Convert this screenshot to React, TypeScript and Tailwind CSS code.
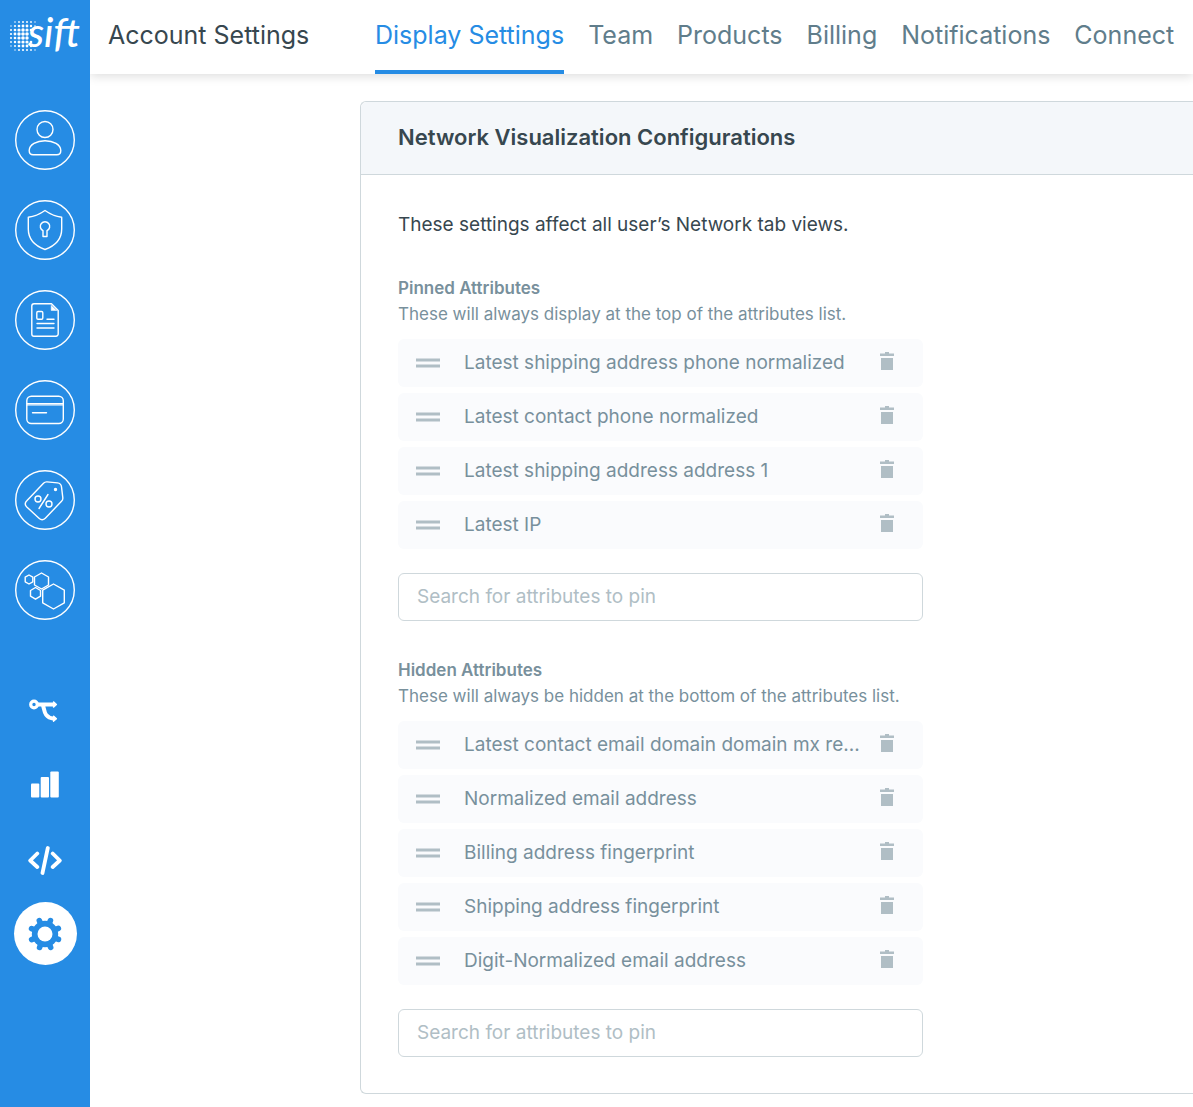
import type { ReactNode } from 'react';

const tabs = ['Display Settings', 'Team', 'Products', 'Billing', 'Notifications', 'Connect'];

const pinned = [
  'Latest shipping address phone normalized',
  'Latest contact phone normalized',
  'Latest shipping address address 1',
  'Latest IP',
];

const hidden = [
  'Latest contact email domain domain mx re...',
  'Normalized email address',
  'Billing address fingerprint',
  'Shipping address fingerprint',
  'Digit-Normalized email address',
];

// Halftone dots behind the wordmark: radius per column, row by row
const dotRadii = [
  [0, 0.8, 0.9, 1, 1, 0.9, 0.7],
  [0.7, 1.1, 1.3, 1.4, 1.4, 1.2, 0.8],
  [1, 1.3, 1.6, 1.7, 1.6, 1.3, 0],
  [1.1, 1.4, 1.7, 1.8, 1.8, 0, 0],
  [1, 1.3, 1.6, 1.8, 1.7, 0, 0],
  [0.9, 1.2, 1.5, 1.6, 1.6, 1.3, 0],
  [0.7, 1, 1.3, 1.4, 1.4, 1.2, 0.8],
  [0, 0.7, 1, 1.1, 1, 0.9, 0.7],
];

function Logo() {
  return (
    <a href="#" aria-label="sift" className="relative block h-14 w-full text-white">
      <svg className="absolute left-2 top-5" width="32" height="32" viewBox="0 0 32 32" fill="currentColor">
        {dotRadii.map((row, y) =>
          row.map((r, x) => (r ? <circle key={`${x}-${y}`} cx={3 + x * 4} cy={2 + y * 4} r={r} /> : null)),
        )}
      </svg>
      <span className="absolute left-7 top-3 font-['Lato'] text-[40px] font-medium italic leading-10">sift</span>
    </a>
  );
}

function ProductIcon({ label, children }: { label: string; children: ReactNode }) {
  return (
    <a href="#" aria-label={label} className="block text-white">
      <svg
        width="60"
        height="60"
        viewBox="0 0 60 60"
        fill="none"
        stroke="currentColor"
        strokeWidth="1.4"
        strokeLinejoin="round"
        strokeLinecap="round"
      >
        <circle cx="30" cy="30" r="29.3" />
        {children}
      </svg>
    </a>
  );
}

function Sidebar() {
  return (
    <nav aria-label="Main" className="flex w-[90px] shrink-0 flex-col items-center bg-[#268ce4]">
      <Logo />
      <div className="mt-[54px] flex flex-col gap-[30px]">
        <ProductIcon label="Accounts">
          <circle cx="30" cy="19.5" r="8" />
          <path d="M14.2 40.5c0-6 7.5-9.8 15.8-9.8s15.8 3.8 15.8 9.8c0 2.600-1.400 4.300-4 4.300H18.200c-2.600 0-4-1.700-4-4.300z" />
        </ProductIcon>
        <ProductIcon label="Account defense">
          <path d="M30 10.500C25 14 19 16.500 13.300 17.300V29c0 10 7 17 16.700 20.500C39.700 46 46.700 39 46.700 29V17.300C41 16.500 35 14 30 10.500z" />
          <path d="M28 30.700a4.700 4.700 0 1 1 4 0v5.800h-4z" />
        </ProductIcon>
        <ProductIcon label="Content integrity">
          <path d="M36.500 13.800H19a2.200 2.200 0 0 0-2.200 2.200v28a2.200 2.200 0 0 0 2.200 2.200h22a2.200 2.200 0 0 0 2.200-2.200V20.500z" />
          <path d="M36.200 15.500v5h5.500z" fill="currentColor" strokeWidth="0.5" />
          <rect x="21.800" y="21.500" width="6" height="7.800" rx="1.200" />
          <path d="M32 29.300h7M22 33.500h17M22 38h17" />
        </ProductIcon>
        <ProductIcon label="Payment protection">
          <rect x="11.800" y="16.200" width="36.500" height="27.300" rx="4.500" />
          <path d="M12 23.600h36M12 25h36" strokeWidth="1.100" />
          <path d="M17.500 32.800h14" />
        </ProductIcon>
        <ProductIcon label="Promotion abuse">
          <path d="M28.500 13.200c1-1 2-1.400 3.500-1.300l10.500 1c2.500.3 3.700 1.600 4 4l1.300 10.700c.2 1.500-.2 2.700-1.300 3.700L30.300 48.200c-2 2-4.300 2-6.300 0L11.800 37c-2-2-2-4.200 0-6.200z" />
          <circle cx="23" cy="29" r="3" />
          <circle cx="34" cy="34" r="3" />
          <path d="M33 24.500L24 38.500" />
          <circle cx="40.500" cy="19.500" r="1" fill="currentColor" />
        </ProductIcon>
        <ProductIcon label="Workflows">
          <path d="M14 15l3.800 2.200v4.600L14 24l-3.800-2.200v-4.600z" />
          <path d="M26.500 13l7 4v8l-7 4-7-4v-8z" />
          <path d="M20.500 27.500l5 3v5.700l-5 3-5-3v-5.700z" />
          <path d="M38.500 24l10.800 6.200v12.600L38.500 49l-10.800-6.200V30.200z" />
        </ProductIcon>
      </div>

      <div className="mt-[75px] flex flex-col items-center">
        <a href="#" aria-label="Routes" className="flex h-[30px] w-[34px] items-center justify-center text-white">
          <svg width="34" height="30" viewBox="0 0 34 30" fill="none" stroke="currentColor">
            <circle cx="6" cy="9.500" r="3.300" strokeWidth="3.200" />
            <path d="M9 9.500h17M14.500 9.500c2.500 3.500 0 13 11.500 14.200" strokeWidth="4" />
            <path
              d="M25.500 6.800l3 2.700-3 2.700zM25.500 21l3 2.700-3 2.700z"
              fill="currentColor"
              strokeWidth="1.200"
              strokeLinejoin="round"
            />
          </svg>
        </a>
        <a href="#" aria-label="Reports" className="mt-11 flex h-[30px] w-[34px] items-center justify-center text-white">
          <svg width="34" height="30" viewBox="0 0 34 30" fill="currentColor">
            <rect x="3" y="14.500" width="8.300" height="14" rx="1" />
            <rect x="12.700" y="8" width="8.300" height="20.500" rx="1" />
            <rect x="22.300" y="2.500" width="8.500" height="26" rx="1" />
          </svg>
        </a>
        <a href="#" aria-label="Developer" className="mt-[46px] flex h-[30px] w-9 items-center justify-center text-white">
          <svg
            width="36"
            height="30"
            viewBox="0 0 36 30"
            fill="none"
            stroke="currentColor"
            strokeWidth="3.800"
            strokeLinecap="round"
            strokeLinejoin="round"
          >
            <path d="M10.300 8.500L3.200 15.500l7.100 6.500M25.700 8.500l7.100 7-7.100 6.500M20.800 3l-5.300 25" />
          </svg>
        </a>
        <a
          href="#"
          aria-label="Settings"
          aria-current="page"
          className="mt-[27px] flex h-[63px] w-[63px] items-center justify-center rounded-full bg-white text-[#268ce4]"
        >
          <svg width="36" height="36" viewBox="-18 -18 36 36">
            <g transform="rotate(22)" stroke="currentColor" strokeWidth="5.600" strokeLinecap="round">
              {[0, 45, 90, 135].map((a) => (
                <path key={a} transform={`rotate(${a})`} d="M-14.500 0h29" />
              ))}
            </g>
            <circle r="13.200" fill="currentColor" />
            <circle r="7.500" fill="white" />
          </svg>
        </a>
      </div>
    </nav>
  );
}

function AttributeRow({ name }: { name: string }) {
  return (
    <li className="flex h-12 items-center rounded-md bg-[#fafbfd] pl-[18px] pr-7 text-[19px] text-[#78909c]">
      <svg className="shrink-0 text-[#b0bec5]" width="24" height="10" viewBox="0 0 24 10" fill="currentColor">
        <path d="M0 .5h24v3H0zM0 6.500h24v3H0z" />
      </svg>
      <span className="ml-6 min-w-0 flex-1 truncate">{name}</span>
      <button type="button" aria-label={`Remove ${name}`} className="mb-1 ml-3 shrink-0 text-[#b0bec5]">
        <svg width="16" height="18" viewBox="0 0 16 18" fill="currentColor">
          <path d="M1 1.500h5V0h4v1.500h5V4H1zM2 6h12v12H2z" />
        </svg>
      </button>
    </li>
  );
}

type SectionProps = { id: string; title: string; hint: string; items: string[] };

function AttributeSection({ id, title, hint, items }: SectionProps) {
  return (
    <section className="mt-9">
      <h3 className="text-[17px] font-semibold leading-[26px] text-[#78909c]">
        <label htmlFor={id}>{title}</label>
      </h3>
      <p className="text-[17px] leading-[26px] text-[#78909c]">{hint}</p>
      <ul className="mt-3 flex flex-col gap-1.5">
        {items.map((name) => (
          <AttributeRow key={name} name={name} />
        ))}
      </ul>
      <input
        id={id}
        type="text"
        placeholder="Search for attributes to pin"
        className="mt-6 block h-12 w-full rounded-md border border-[#cfd8dc] bg-white px-[18px] pb-0.5 text-[19px] text-[#37474f] placeholder:text-[#b0bec5]"
      />
    </section>
  );
}

export default function App() {
  return (
    <div className="flex min-h-screen bg-white font-['Inter',sans-serif] text-[#37474f]">
      <Sidebar />

      <div className="min-w-0 flex-1 overflow-x-clip">
        {/* Header */}
        <header className="flex h-[74px] items-stretch bg-white pl-[18px] text-[25px] shadow-[0_2px_10px_rgba(0,0,0,0.14)]">
          <h1 className="flex w-[267px] shrink-0 items-center pb-0.5">Account Settings</h1>
          <nav aria-label="Account settings" className="flex gap-6">
            {tabs.map((tab, i) => (
              <a
                key={tab}
                href="#"
                className={
                  i === 0
                    ? 'flex items-center whitespace-nowrap border-b-4 border-[#268ce4] pt-0.5 text-[#268ce4]'
                    : 'flex items-center whitespace-nowrap border-b-4 border-transparent pt-0.5 text-[#607d8b]'
                }
              >
                {tab}
              </a>
            ))}
          </nav>
        </header>

        {/* Settings panel */}
        <main className="pb-[13px] pl-[270px] pt-[27px]">
          <div className="rounded-l-md border border-r-0 border-[#cfd8dc]">
            <div className="rounded-tl-md border-b border-[#cfd8dc] bg-[#f4f7fa] px-[37px] pb-[21px] pt-[19px]">
              <h2 className="text-[22px] font-semibold leading-8">Network Visualization Configurations</h2>
            </div>
            <div className="px-[37px] py-9">
              <p className="text-[19px] leading-7">These settings affect all user’s Network tab views.</p>
              <div className="max-w-[525px]">
                <AttributeSection
                  id="pin-attributes"
                  title="Pinned Attributes"
                  hint="These will always display at the top of the attributes list."
                  items={pinned}
                />
                <AttributeSection
                  id="hide-attributes"
                  title="Hidden Attributes"
                  hint="These will always be hidden at the bottom of the attributes list."
                  items={hidden}
                />
              </div>
            </div>
          </div>
        </main>
      </div>
    </div>
  );
}
